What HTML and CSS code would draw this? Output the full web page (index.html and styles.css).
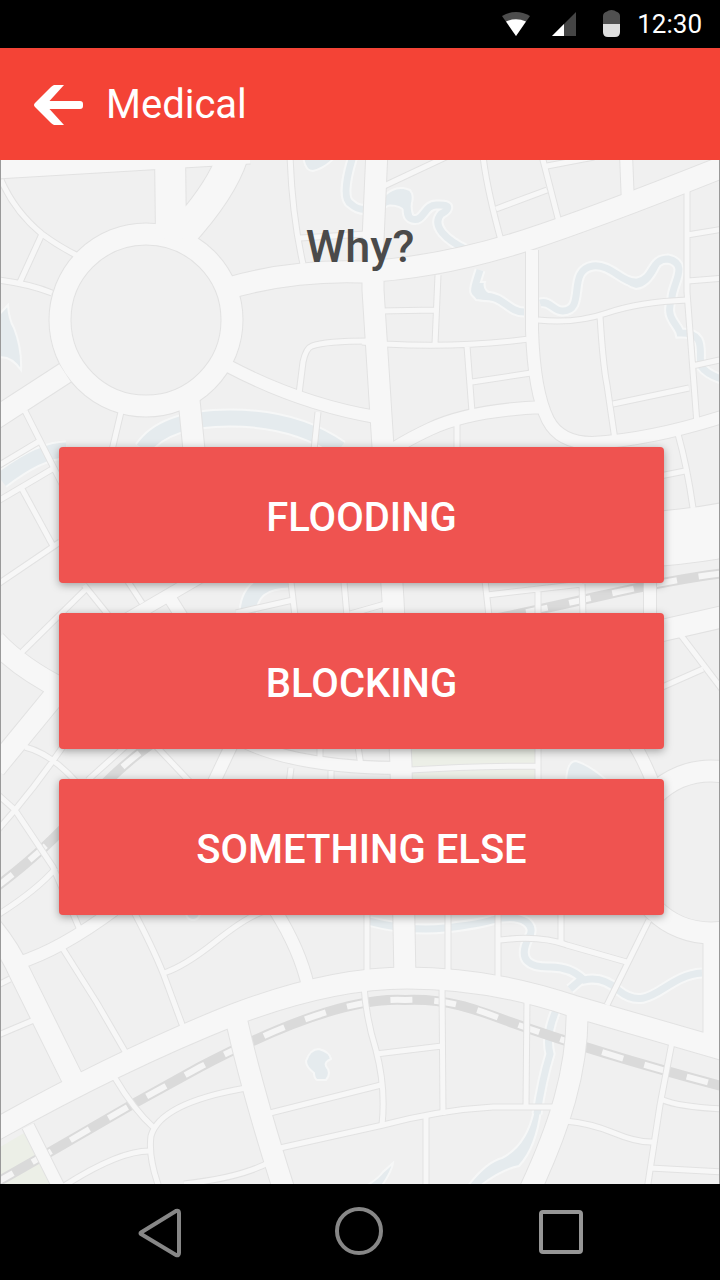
FILE: index.html
```html
<!DOCTYPE html>
<html lang="en">
<head>
<meta charset="utf-8">
<meta name="viewport" content="width=device-width, initial-scale=1">
<title>Medical</title>
<link rel="stylesheet" href="styles.css">
</head>
<body>
<div class="status-bar">
  <svg class="wifi-icon" width="28" height="24" viewBox="0 0 28 24" aria-hidden="true">
    <path fill="#4d4d4d" d="M0 4Q14-4 28 4L14 24z"/>
    <path fill="#fff" d="M4 9.500Q14 5 24 9.500L14 24z"/>
  </svg>
  <svg class="signal-icon" width="24" height="24" viewBox="0 0 24 24" aria-hidden="true">
    <path fill="#454545" d="M24 0V24H0z"/>
    <path fill="#fff" d="M12 12V24H0z"/>
  </svg>
  <svg class="battery-icon" width="17" height="28" viewBox="0 0 17 28" aria-hidden="true">
    <path fill="#505050" d="M0 14V6Q0 2.500 4 1.500Q5 0 8.500 0T13 1.500Q17 2.500 17 6V14z"/>
    <path fill="#dedede" d="M0 14H17V22Q17 27 12 27H5Q0 27 0 22z"/>
  </svg>
  <time class="clock">12:30</time>
</div>

<header class="app-bar">
  <button class="back" type="button" aria-label="Back">
    <svg width="50" height="40" viewBox="0 0 50 40" aria-hidden="true">
      <path fill="#fff" d="M20 0H30L15.500 16H46Q49 16 49 19V21Q49 24 46 24H15.500L30 40H20Q18 39 17 38L1 22Q-1 20 1 18L17 2Q18 1 20 0z"/>
    </svg>
  </button>
  <h1 class="title">Medical</h1>
</header>

<main class="content">
  <svg class="map" viewBox="1 160 718 1024" preserveAspectRatio="xMidYMid slice" aria-hidden="true">
    <defs>
      <g id="rivers">
        <path d="M353 156Q340 198 351 204Q362 214 378 206T403 193C412 198 402 216 412 219C424 223 424 204 437 205C454 204 447 211 441 214C431 226 446 240 467 250"/>
        <path d="M480 270C474 290 470 294 484 296C504 296 508 312 524 312"/>
        <path d="M540 303C550 300 554 312 563 311C587 310 566 270 593 266C612 264 622 284 638 282C655 278 650 259 668 259C690 264 672 284 672 298C664 318 678 324 680 333C708 332 698 354 701 366Q707 375 725 380"/>
        <path d="M368 921Q410 932 445 928T492 920C526 912 536 927 529 937C516 962 532 967 548 967Q570 966 584 980Q603 976 618 990C650 1016 664 975 702 973"/>
        <path d="M584 977L570 989M557 1008Q545 1035 550 1054Q542 1080 537 1114"/>
      </g>
      <g id="canals">
        <path d="M143 449Q164 418 230 418T340 449M1 480Q40 450 66 450M290 580Q248 580 248 615"/>
      </g>
      <g id="lakes">
        <path d="M-4 318L8 305Q9 320 14 328Q22 348 21 370Q10 354-4 358z"/>
        <path d="M303 154Q304 171 313 171Q326 168 337 155z"/>
        <path d="M384 206V196Q396 184 410 190Q415 196 411 206L414 219Q406 222 405 212Q400 204 384 206z"/>
        <path d="M475 282L485 282Q482 292 498 296L508 302Q490 302 476 300Q468 292 475 282z"/>
        <path d="M614 272Q632 280 640 277Q650 272 655 260L660 266Q650 288 636 289Q624 286 614 272z"/>
        <path d="M319 1049Q330 1052 331 1059Q324 1062 326 1066Q332 1073 326 1080H317Q314 1078 314 1073Q306 1067 306 1061Q310 1049 319 1049z"/>
        <path d="M534 1110H541Q536 1148 519 1166Q500 1170 479 1187H467Q486 1162 502 1158Q527 1145 534 1110z"/>
        <path d="M393 1163Q392 1171 381 1187H364Q377 1180 383 1172z"/>
        <path d="M566 785Q566 761 576 761Q592 766 612 785z"/>
        <circle cx="193" cy="913" r="7"/>
      </g>
      <g id="rail">
        <path d="M-6 1184L50 1152L133 1104L200 1067Q335 996 405 1000C448 998 478 1010 510 1022Q600 1054 725 1087"/>
        <path d="M-5 888Q48 848 80 810Q115 770 150 745"/>
        <path d="M440 630Q520 614 600 596T725 573"/>
      </g>
      <g id="lanes">
        <path d="M1 180Q15 212 42 234Q58 246 78 256M42 234L20 282M-2 280Q30 284 52 293M290 155Q292 215 303 264M300 238L366 234"/>
        <path d="M370 341Q325 341 312 346Q306 348 303 362L299 394M318 412L314 450M121 412L112 450M25 411L64 488M-2 466L38 442M-2 501L54 468M22 489L53 546M-2 584L60 542"/>
        <path d="M384 186L448 156M483 156Q487 190 502 244M542 156L560 226M547 166L594 157M496 209L547 190M687 190V292L697 424M687 235L724 229M688 281L724 278M692 366L724 359"/>
        <path d="M538 320Q575 324 607 313T687 300M600 316Q603 365 607 385L615 440M613 404L689 388M438 275L435 344M380 311L436 310M362 342L385 344Q460 348 529 339M467 346L472 412M472 382L531 373M457 422V450"/>
        <path d="M678 434Q687 466 693 508M660 476L685 471M485 580L489 616M487 595L582 584M538 589V616M582 584L583 616M680 634L724 692M660 688L703 669"/>
        <path d="M291 582L295 616M236 613L293 600M344 582L347 616M350 614L385 604M127 580L142 603M22 652L87 588M84 585L109 616"/>
        <path d="M25 747Q52 754 78 784M64 745Q40 780 15 810L-4 832M-4 793L15 810L53 867L80 930M-4 916Q36 891 56 868M88 780L128 744M154 744L190 782"/>
        <path d="M320 746V763M358 746L361 766M291 768L289 784M331 771V784M410 770Q470 766 538 766M538 744V784"/>
        <path d="M63 949L97 1003L126 1053M133 910Q153 948 163 973L183 1027M164 973Q185 966 215 942T262 912M-4 986L10 979M-4 1036L34 1020M115 1078Q134 1110 154 1128M246 1088Q160 1103 151 1136Q148 1158 160 1190"/>
        <path d="M64 1186Q120 1150 151 1151M270 1162Q240 1178 184 1184M270 1113Q330 1098 381 1085M280 1148L383 1125Q440 1110 493 1107H555"/>
        <path d="M367 910V972M448 910V972M498 910V977M500 940Q540 935 567 945L630 963M561 910V943M649 920L607 1005M364 986Q366 1018 376 1050Q386 1088 382 1125M376 1054L442 1046M442 984L443 1115M527 998L526 1107M426 1117V1188"/>
        <path d="M672 1042L660 1105L647 1190M663 1100Q680 1107 724 1109M565 1121Q590 1123 614 1133T654 1142M650 1168L724 1172"/>
      </g>
      <g id="streets">
        <path d="M228 366Q300 404 376 417M626 154L628 204M532 250V330Q534 392 548 420Q560 443 592 443Q650 440 725 416M544 407Q470 410 430 429T380 460M650 580V620"/>
        <path d="M126 620Q160 600 205 574M170 598L185 622M232 744L213 784M245 742Q300 768 402 768M634 744Q645 762 655 788M18 963Q60 950 114 910M275 910Q300 950 308 986M28 1126L60 1190"/>
      </g>
      <g id="avenues">
        <path d="M65 373L-6 419M189 400L194 450M225 289Q290 270 360 272Q440 268 527 240Q600 216 730 164M-4 168L250 153M377 150L373 240V290L383 447L393 600L401 765L405 980"/>
        <path d="M660 631L726 616M-5 641Q20 668 64 690M64 684L-5 768M-8 928Q10 950 20 973L76 1086M-5 1130Q120 1060 233 1015Q330 978 407 978Q490 978 573 1006Q650 1028 725 1050M236 1018Q252 1090 284 1190M577 1006C579 1070 558 1130 530 1190M714 935V1042"/>
        <circle cx="146" cy="320" r="86"/>
        <circle cx="711" cy="852" r="81"/>
      </g>
      <g id="highways">
        <path d="M170 150L171 238M235 148Q226 186 180 236"/>
      </g>
      <g id="boulevard">
        <path d="M640 540Q690 537 730 529"/>
      </g>
    </defs>
    <path class="park" d="M0 1147L24 1133L52 1186H0zM412 745H536V785H412z"/>
    <use class="bank river-bank" href="#rivers"/>
    <use class="bank canal-bank" href="#canals"/>
    <use class="lake" href="#lakes"/>
    <use class="water river" href="#rivers"/>
    <use class="water canal" href="#canals"/>
    <use class="rail" href="#rail"/>
    <use class="sleepers" href="#rail"/>
    <use class="edge lane-edge" href="#lanes"/>
    <use class="edge street-edge" href="#streets"/>
    <use class="edge avenue-edge" href="#avenues"/>
    <use class="edge highway-edge" href="#highways"/>
    <use class="edge boulevard-edge" href="#boulevard"/>
    <use class="road lane" href="#lanes"/>
    <use class="road street" href="#streets"/>
    <use class="road avenue" href="#avenues"/>
    <use class="road highway" href="#highways"/>
    <use class="road boulevard" href="#boulevard"/>
  </svg>
  <h2 class="question">Why?</h2>
  <div class="choices">
    <button class="choice" type="button">FLOODING</button>
    <button class="choice" type="button">BLOCKING</button>
    <button class="choice" type="button">SOMETHING ELSE</button>
  </div>
</main>

<nav class="nav-bar" aria-label="System">
  <button class="nav-button" type="button" aria-label="Back">
    <svg width="48" height="50" viewBox="0 0 48 50" aria-hidden="true"><path fill="none" stroke="#878787" stroke-width="4" stroke-linejoin="round" d="M6 25.500Q5 26 6 27L41 48Q44 49 44 46V6Q44 3 41 4z"/></svg>
  </button>
  <button class="nav-button" type="button" aria-label="Home">
    <svg width="48" height="50" viewBox="1 0 48 50" aria-hidden="true"><circle cx="24" cy="24" r="22" fill="none" stroke="#878787" stroke-width="4"/></svg>
  </button>
  <button class="nav-button" type="button" aria-label="Recent apps">
    <svg width="48" height="50" viewBox="0 0 48 50" aria-hidden="true"><rect x="4" y="5" width="40" height="40" rx="2" fill="none" stroke="#969696" stroke-width="4"/></svg>
  </button>
</nav>
</body>
</html>
```

FILE: styles.css
```css
* {
  box-sizing: border-box;
}

body {
  display: flex;
  flex-direction: column;
  min-height: 100vh;
  margin: 0;
  background: #000;
  font-family: Roboto, "Liberation Sans", sans-serif;
}

button {
  padding: 0;
  border: 0;
  background: none;
  font: inherit;
  cursor: pointer;
}

svg {
  display: block;
  overflow: visible;
}

.status-bar {
  display: flex;
  align-items: center;
  justify-content: flex-end;
  height: 48px;
  padding-right: 18px;
  color: #fff;
}

.signal-icon {
  margin-left: 22px;
}

.battery-icon {
  margin-left: 27px;
}

.clock {
  margin-left: 17px;
  font-size: 26px;
  line-height: 48px;
}

.app-bar {
  display: flex;
  align-items: center;
  gap: 22px;
  height: 112px;
  padding: 2px 34px 0;
  background: #f44336;
  color: #fff;
}

.title {
  margin: 0;
  font-size: 40px;
  font-weight: 400;
  line-height: 48px;
}

.content {
  position: relative;
  flex: 1;
  padding: 60px 0 64px;
  border: solid #999;
  border-width: 0 1px;
  background: #f0f0f0;
}

.map {
  position: absolute;
  inset: 0;
  width: 100%;
  height: 100%;
  overflow: hidden;
}

.map use {
  fill: none;
}

.map .park {
  fill: #ecefe7;
}

.map .lake {
  fill: #e5ebee;
  stroke: #f6f7f7;
  stroke-width: 2px;
}

.bank {
  stroke: #f6f7f7;
}

.water {
  stroke: #e5ebee;
}

.river {
  stroke-width: 7px;
}

.river-bank {
  stroke-width: 11px;
}

.canal {
  stroke-width: 15px;
}

.canal-bank {
  stroke-width: 19px;
}

.rail {
  stroke: #dadada;
  stroke-width: 10px;
}

.sleepers {
  stroke: #f5f5f5;
  stroke-width: 6px;
  stroke-dasharray: 22 22;
}

.edge {
  stroke: #e2e2e2;
}

.road {
  stroke: #f7f7f7;
}

.lane-edge {
  stroke-width: 7px;
}

.lane {
  stroke-width: 5px;
}

.street-edge {
  stroke-width: 14px;
}

.street {
  stroke-width: 12px;
}

.avenue-edge {
  stroke-width: 23px;
}

.avenue {
  stroke-width: 21px;
}

.highway-edge {
  stroke-width: 32px;
}

.highway {
  stroke-width: 30px;
}

.boulevard-edge {
  stroke-width: 56px;
}

.boulevard {
  stroke-width: 54px;
}

.question {
  position: relative;
  margin: 0 0 173px;
  color: #4a4a4a;
  font-size: 45px;
  font-weight: 500;
  line-height: 54px;
  text-align: center;
}

.choices {
  position: relative;
  display: flex;
  flex-direction: column;
  gap: 30px;
  padding: 0 55px 0 58px;
}

.choice {
  height: 136px;
  padding-top: 6px;
  border-radius: 4px;
  background: #ef5350;
  box-shadow: 0 2px 8px rgba(0, 0, 0, 0.35);
  color: #fff;
  font-size: 40px;
  font-weight: 500;
  line-height: 48px;
}

.nav-bar {
  display: flex;
  align-items: center;
  justify-content: center;
  gap: 153px;
  height: 96px;
}
```
